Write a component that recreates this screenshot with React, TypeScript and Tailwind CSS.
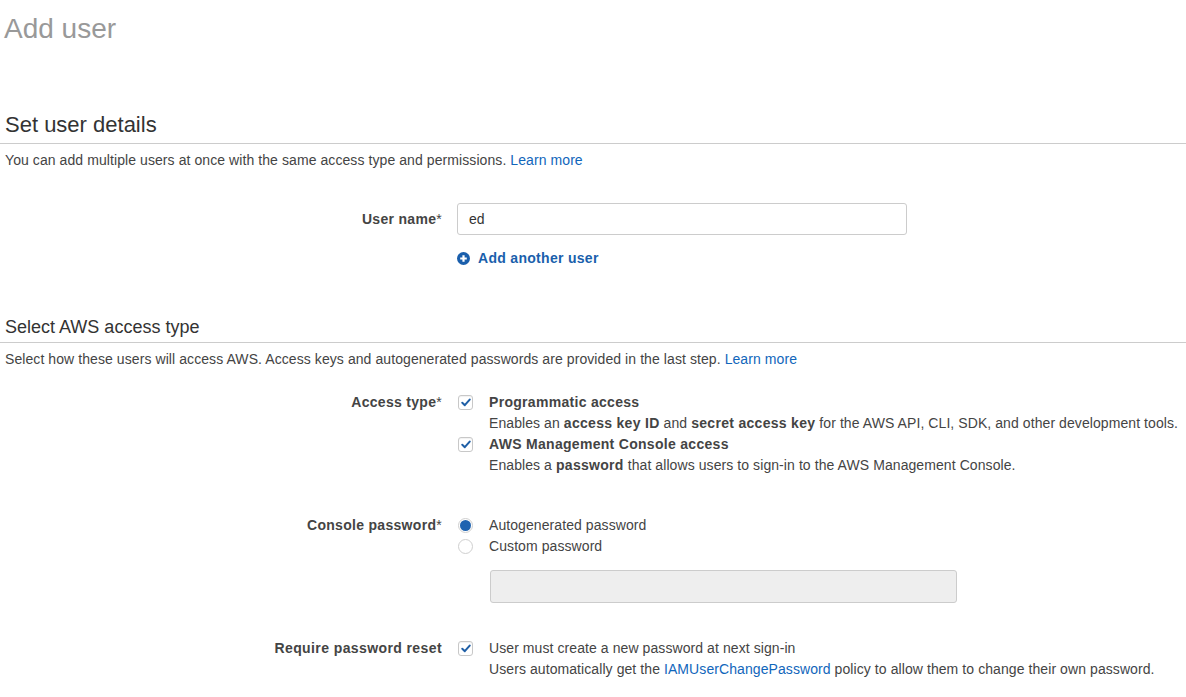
import React from "react";

function Check() {
  return (
    <span className="flex h-[15px] w-[15px] shrink-0 items-center justify-center rounded-[3px] border border-[#c8c8c8] bg-white shadow-[inset_0_1px_1px_rgba(0,0,0,0.06)]">
      <svg width="10" height="9" viewBox="0 0 10 9">
        <path d="M1.3 4.8 L3.8 7.2 L8.7 1.6" fill="none" stroke="#1f5fa6" strokeWidth="2" strokeLinecap="round" strokeLinejoin="round" />
      </svg>
    </span>
  );
}

function Radio({ on }: { on?: boolean }) {
  return (
    <span className="flex h-[15px] w-[15px] shrink-0 items-center justify-center rounded-full border border-[#cfcfcf] bg-white">
      {on && <span className="h-[11px] w-[11px] rounded-full bg-[#1f63b0]" />}
    </span>
  );
}

export default function App() {
  return (
    <div className="min-h-[697px] w-[1186px] bg-white font-['Liberation_Sans',Arial,sans-serif] text-[14px] tracking-[0.08px] text-[#444]">
      <h1 className="pl-[4px] pt-[13px] text-[28px] leading-[32px] tracking-normal text-[#999]">Add user</h1>

      <h2 className="mt-[67px] border-b border-[#ccc] pb-[5px] pl-[5px] text-[22px] leading-[26px] tracking-normal text-[#333]">Set user details</h2>
      <p className="mt-[6px] pl-[5px] leading-[20px]">
        You can add multiple users at once with the same access type and permissions.{" "}
        <span className="text-[#1166bb]">Learn more</span>
      </p>

      <div className="mt-[33px] flex items-center">
        <div className="w-[443px] shrink-0 pr-[1px] text-right font-bold tracking-[0.3px] text-[#444]">
          User name<span className="font-normal">*</span>
        </div>
        <div className="ml-[14px] flex h-[32px] w-[450px] items-center rounded-[3px] border border-[#ccc] px-[11px] text-[#333]">ed</div>
      </div>

      <div className="mt-[13px] flex h-[20px] items-center pl-[457px] font-bold tracking-[0.3px] text-[#1a5fac]">
        <svg width="13" height="13" viewBox="0 0 13 13" className="mr-[8px]">
          <circle cx="6.5" cy="6.5" r="6.5" fill="#1a5fac" />
          <path d="M6.5 3.2 V9.8 M3.2 6.5 H9.8" stroke="#fff" strokeWidth="2.2" />
        </svg>
        Add another user
      </div>

      <h2 className="mt-[48px] border-b border-[#ccc] pb-[4px] pl-[5px] text-[18px] leading-[22px] tracking-normal text-[#333]">Select AWS access type</h2>
      <p className="mt-[6px] pl-[5px] leading-[20px]">
        Select how these users will access AWS. Access keys and autogenerated passwords are provided in the last step.{" "}
        <span className="text-[#1166bb]">Learn more</span>
      </p>

      <div className="mt-[23px] flex">
        <div className="w-[443px] shrink-0 pr-[1px] text-right font-bold leading-[21px] tracking-[0.3px] text-[#444]">
          Access type<span className="font-normal">*</span>
        </div>
        <div className="ml-[14px] flex-1 leading-[21px]">
          <div className="flex items-center">
            <span className="ml-[1px] mr-[16px]"><Check /></span>
            <span className="font-bold tracking-[0.3px]">Programmatic access</span>
          </div>
          <div className="pl-[32px]">
            Enables an <b className="tracking-[0.3px]">access key ID</b> and <b className="tracking-[0.3px]">secret access key</b> for the AWS API, CLI, SDK, and other development tools.
          </div>
          <div className="flex items-center">
            <span className="ml-[1px] mr-[16px]"><Check /></span>
            <span className="font-bold tracking-[0.3px]">AWS Management Console access</span>
          </div>
          <div className="pl-[32px]">
            Enables a <b className="tracking-[0.3px]">password</b> that allows users to sign-in to the AWS Management Console.
          </div>
        </div>
      </div>

      <div className="mt-[39px] flex">
        <div className="w-[443px] shrink-0 pr-[1px] text-right font-bold leading-[21px] tracking-[0.3px] text-[#444]">
          Console password<span className="font-normal">*</span>
        </div>
        <div className="ml-[14px] flex-1 leading-[21px]">
          <div className="flex items-center">
            <span className="ml-[1px] mr-[16px]"><Radio on /></span>
            <span>Autogenerated password</span>
          </div>
          <div className="flex items-center">
            <span className="ml-[1px] mr-[16px]"><Radio /></span>
            <span>Custom password</span>
          </div>
          <div className="ml-[33px] mt-[13px] h-[33px] w-[467px] rounded-[3px] border border-[#ccc] bg-[#eee]" />
        </div>
      </div>

      <div className="mt-[35px] flex">
        <div className="w-[443px] shrink-0 pr-[1px] text-right font-bold leading-[21px] tracking-[0.4px] text-[#444]">Require password reset</div>
        <div className="ml-[14px] flex-1 leading-[21px]">
          <div className="flex items-center">
            <span className="ml-[1px] mr-[16px]"><Check /></span>
            <span>User must create a new password at next sign-in</span>
          </div>
          <div className="pl-[32px]">
            Users automatically get the <span className="text-[#1166bb]">IAMUserChangePassword</span> policy to allow them to change their own password.
          </div>
        </div>
      </div>
    </div>
  );
}
